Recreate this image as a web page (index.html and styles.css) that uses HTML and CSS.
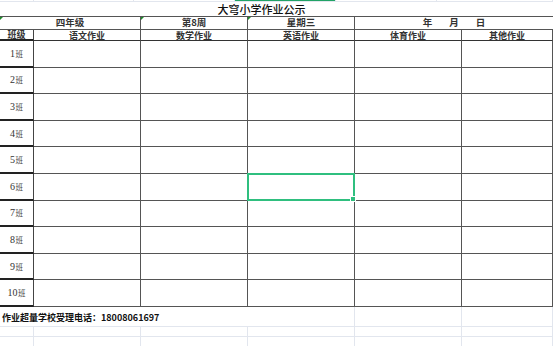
FILE: index.html
```html
<!DOCTYPE html>
<html lang="zh">
<head>
<meta charset="utf-8">
<link rel="stylesheet" href="styles.css">
</head>
<body>
<div class="strip">
  <div class="sc"></div><div class="sc"></div><div class="sc"></div><div class="sc active"></div><div class="sc"></div><div class="sc"></div>
</div>
<div class="sheet">
  <div class="title">大穹小学作业公示</div>

  <div class="c r2 span2 mark">四年级</div>
  <div class="c r2 mark">第8周</div>
  <div class="c r2 mark">星期三</div>
  <div class="c r2 span2 date"><span>年</span><span>月</span><span>日</span></div>

  <div class="c h lead">班级</div>
  <div class="c h">语文作业</div>
  <div class="c h">数学作业</div>
  <div class="c h">英语作业</div>
  <div class="c h">体育作业</div>
  <div class="c h">其他作业</div>

  <div class="c d lead"><b>1</b>班</div><div class="c d"></div><div class="c d"></div><div class="c d"></div><div class="c d"></div><div class="c d"></div>
  <div class="c d lead"><b>2</b>班</div><div class="c d"></div><div class="c d"></div><div class="c d"></div><div class="c d"></div><div class="c d"></div>
  <div class="c d lead"><b>3</b>班</div><div class="c d"></div><div class="c d"></div><div class="c d"></div><div class="c d"></div><div class="c d"></div>
  <div class="c d lead"><b>4</b>班</div><div class="c d"></div><div class="c d"></div><div class="c d"></div><div class="c d"></div><div class="c d"></div>
  <div class="c d lead"><b>5</b>班</div><div class="c d"></div><div class="c d"></div><div class="c d"></div><div class="c d"></div><div class="c d"></div>
  <div class="c d lead"><b>6</b>班</div><div class="c d"></div><div class="c d"></div><div class="c d sel"></div><div class="c d"></div><div class="c d"></div>
  <div class="c d lead"><b>7</b>班</div><div class="c d"></div><div class="c d"></div><div class="c d"></div><div class="c d"></div><div class="c d"></div>
  <div class="c d lead"><b>8</b>班</div><div class="c d"></div><div class="c d"></div><div class="c d"></div><div class="c d"></div><div class="c d"></div>
  <div class="c d lead"><b>9</b>班</div><div class="c d"></div><div class="c d"></div><div class="c d"></div><div class="c d"></div><div class="c d"></div>
  <div class="c d lead"><b>10</b>班</div><div class="c d"></div><div class="c d"></div><div class="c d"></div><div class="c d"></div><div class="c d"></div>

  <div class="foot">作业超量学校受理电话：18008061697</div>
  <div class="g fr"></div><div class="g fr"></div><div class="g fr"></div>

  <div class="g e"></div><div class="g e"></div><div class="g e"></div><div class="g e"></div><div class="g e"></div><div class="g e"></div>
  <div class="g e"></div><div class="g e"></div><div class="g e"></div><div class="g e"></div><div class="g e"></div><div class="g e"></div>
</div>
</body>
</html>
```

FILE: styles.css
```css
html, body {
  margin: 0;
  padding: 0;
  background: #ffffff;
}
body {
  width: 553px;
  height: 346px;
  overflow: hidden;
  font-family: "Noto Sans CJK SC", "Liberation Sans", sans-serif;
  color: #222;
}
.strip {
  display: grid;
  grid-template-columns: 34px 100px 101px 101px 101px 116px;
  height: 2px;
  border-bottom: 1px solid #e2e6ee;
  box-sizing: border-box;
}
.sc {
  border-right: 1px solid #e2e6ee;
}
.sc.active {
  background: #21a366;
}
.sheet {
  display: grid;
  grid-template-columns: 34px 107px 107px 107px 107px 91px;
  grid-template-rows: 15px 13px 11px repeat(10, 26.6px) 20px 10px 10px;
}
.title {
  grid-column: 1 / -1;
  display: flex;
  align-items: center;
  justify-content: center;
  font-size: 11px;
  line-height: 1;
  font-weight: 500;
  color: #111;
  border-bottom: 1px solid #555;
  padding: 1px 30px 0 0;
  box-sizing: border-box;
}
.c {
  box-sizing: border-box;
  border-right: 1px solid #555;
  border-bottom: 1px solid #555;
  display: flex;
  align-items: center;
  justify-content: center;
  position: relative;
}
.span2 {
  grid-column: span 2;
}
.r2 {
  font-size: 9.5px;
  font-weight: 700;
  line-height: 1;
  color: #333;
}
.mark::before {
  content: "";
  position: absolute;
  left: 0;
  top: 0;
  border-top: 3px solid #1d8a2a;
  border-right: 3px solid transparent;
}
.date {
  gap: 17px;
  border-right: 0;
}
.h {
  font-size: 9px;
  font-weight: 700;
  line-height: 1;
  color: #333;
  border-bottom: 1px solid #333;
}
.h:last-child {
  border-right: 0;
}
.lead {
  border-bottom: 2px solid #222;
  border-right: 1px solid #444;
}
.d {
  font-size: 7.5px;
  color: #444;
}
.d b {
  font-family: "Liberation Serif", serif;
  font-weight: 400;
  font-size: 10px;
  color: #333;
  margin-right: 0.5px;
}
.sel {
  border: 2px solid #2fbf7f;
  z-index: 2;
  margin: -1px 0 0 -1px;
}
.sel::after {
  content: "";
  position: absolute;
  right: -3px;
  bottom: -3px;
  width: 4px;
  height: 4px;
  background: #2fbf7f;
  border: 1px solid #ffffff;
}
.foot {
  grid-column: 1 / 4;
  font-size: 9px;
  font-weight: 700;
  color: #111;
  display: flex;
  align-items: center;
  padding-left: 2px;
  padding-top: 2px;
  border-bottom: 1px solid #e2e6ee;
}
.g {
  box-sizing: border-box;
  border-right: 1px solid #e2e6ee;
  border-bottom: 1px solid #e2e6ee;
}
```
